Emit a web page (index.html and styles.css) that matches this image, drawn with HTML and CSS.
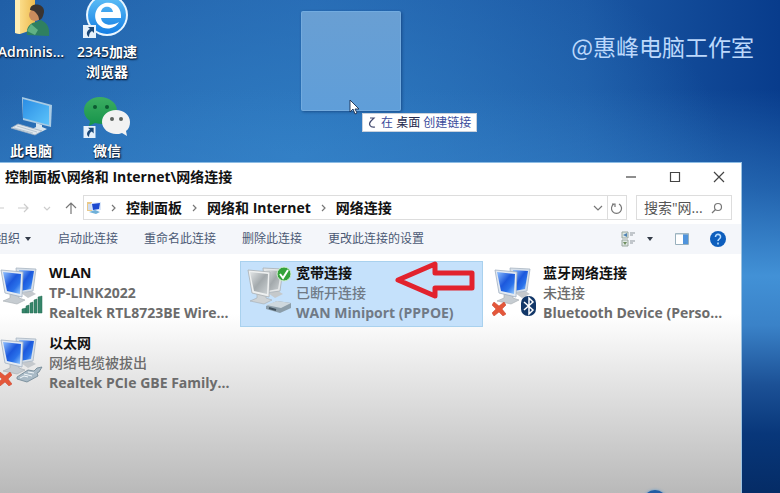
FILE: index.html
```html
<!DOCTYPE html>
<html lang="zh-CN">
<head>
<meta charset="utf-8">
<meta name="viewport" content="width=device-width, initial-scale=1">
<title>网络连接</title>
<link rel="stylesheet" href="styles.css">
</head>
<body>
<svg class="defs" aria-hidden="true">
  <defs>
    <linearGradient id="screen" x1="0" y1="0" x2="1" y2="1">
      <stop offset="0" stop-color="#8fc0ff"/><stop offset=".45" stop-color="#1c58dc"/><stop offset=".7" stop-color="#2a72ea"/><stop offset="1" stop-color="#9dd0ff"/>
    </linearGradient>
    <linearGradient id="screen-off" x1="0" y1="0" x2="1" y2="1">
      <stop offset="0" stop-color="#e2e5e6"/><stop offset=".5" stop-color="#a3a9ac"/><stop offset="1" stop-color="#cdd2d4"/>
    </linearGradient>
    <linearGradient id="pc" x1="0" y1="0" x2="1" y2="1">
      <stop offset="0" stop-color="#2b8de4"/><stop offset="1" stop-color="#5cc4fb"/>
    </linearGradient>
    <linearGradient id="folder"><stop offset="0" stop-color="#ffe79b"/><stop offset="1" stop-color="#eebb50"/></linearGradient>
    <linearGradient id="globe" x1="0" y1="0" x2="0" y2="1"><stop offset="0" stop-color="#5fc0f7"/><stop offset="1" stop-color="#147ee4"/></linearGradient>
    <linearGradient id="green" x1="0" y1="0" x2="0" y2="1"><stop offset="0" stop-color="#3cae62"/><stop offset="1" stop-color="#16934a"/></linearGradient>
    <symbol id="monitors" viewBox="0 0 48 52">
      <path d="M24 28l10-2 5 3-8 4z" fill="#c5c9cd"/>
      <path d="M19 3l20 1-3 22-15 2z" fill="#d7e0ea" stroke="#a8b5c2" stroke-width=".8"/>
      <path d="M22 5l15 1-3 18-11 2z" fill="url(#screen)"/>
      <path d="M13 28l9 1v4l6 2-8 4-14-3 7-3z" fill="#c6ccd1" stroke="#a5abb0" stroke-width=".6"/>
      <path d="M4 5l22 2-1 25-17-4z" fill="#e3eaf2" stroke="#a1b0c2" stroke-width=".8"/>
      <path d="M6 7l18 2-1 20-13-3z" fill="url(#screen)"/>
    </symbol>
    <symbol id="monitors-off" viewBox="0 0 48 52">
      <path d="M24 28l10-2 5 3-8 4z" fill="#c5c9cb"/>
      <path d="M19 3l20 1-3 22-15 2z" fill="#e4e7e8" stroke="#a9afb2" stroke-width=".8"/>
      <path d="M22 5l15 1-3 18-11 2z" fill="url(#screen-off)"/>
      <path d="M13 28l9 1v4l6 2-8 4-14-3 7-3z" fill="#cfd3d5" stroke="#a5abb0" stroke-width=".6"/>
      <path d="M4 5l22 2-1 25-17-4z" fill="#eef0f0" stroke="#a9afb2" stroke-width=".8"/>
      <path d="M6 7l18 2-1 20-13-3z" fill="url(#screen-off)"/>
    </symbol>
    <symbol id="cross" viewBox="0 0 14 14">
      <path d="M2 0l5 4 5-4 2 3-4 4 4 5-3 2-4-4-5 4-2-3 4-4-4-4z" fill="#e4573a" stroke="#c9402a" stroke-width=".5"/>
    </symbol>
    <symbol id="shortcut" viewBox="0 0 13 13">
      <path d="M0 0h13v13H0z" fill="#e6f1fb"/>
      <path d="M5 2h6v6L9 6C7 7 6 9 6 12 3 10 3 6 7 4z" fill="#1b4878"/>
    </symbol>
    <symbol id="chevron" viewBox="0 0 8 12"><path d="M2 3l3 3-3 3" fill="none" stroke="#777" stroke-width="1.2"/></symbol>
    <symbol id="caret" viewBox="0 0 8 6"><path d="M1 1h6L4 5z" fill="#333b48"/></symbol>
  </defs>
</svg>

<main class="desktop">
  <nav class="shortcuts" aria-label="桌面">
    <a class="shortcut" href="#">
      <svg class="shortcut-icon" viewBox="0 0 48 42">
        <path d="M8 0l20-2v34l-15 5-5-1z" fill="url(#folder)"/>
        <path d="M8 0l5 2v35l-5-1z" fill="#ffeeb5"/>
        <path d="M20 38c-1-8 3-12 9-13l5-2c6 3 9 7 8 16z" fill="#2f8060"/>
        <path d="M24 27l-4 7 8 4 3-5z" fill="#61b184"/>
        <circle cx="28" cy="18" r="6" fill="#c98c5d"/>
        <path d="M23 13c0-8 15-7 14 2-1 6-3 8-5 8 0-5-3-7-5-9z" fill="#3b3430"/>
      </svg>
      <span>Adminis...</span>
    </a>
    <a class="shortcut" href="#">
      <svg class="shortcut-icon" viewBox="0 0 48 42">
        <circle cx="24" cy="18" r="21" fill="#e9f6ff"/>
        <circle cx="24" cy="18" r="19" fill="url(#globe)"/>
        <path d="M38 21H18c1 7 10 9 18 4-4 7-14 9-20 3-7-7-4-19 6-22 10-2 17 5 16 15zM18 15h12c-1-7-11-7-12 0z" fill="#fff"/>
        <use href="#shortcut" x="0" y="28" width="13" height="13"/>
      </svg>
      <span>2345加速<br>浏览器</span>
    </a>
    <a class="shortcut" href="#">
      <svg class="shortcut-icon" viewBox="0 0 48 42">
        <path d="M15 1l30 8-1 22-28-7z" fill="#a9cbe4"/>
        <path d="M16 3l26 7v19l-26-7z" fill="url(#pc)"/>
        <path d="M29 27l6 2v2l5 2-6 3-9-3 4-2z" fill="#d8e5ee"/>
        <path d="M11 28l24 7-7 4-24-7z" fill="#e0e7ed" stroke="#9eb0c1" stroke-width=".8"/>
        <path d="M10 30l20 6M7 32l19 5" stroke="#9baebe" stroke-width=".6"/>
      </svg>
      <span>此电脑</span>
    </a>
    <a class="shortcut" href="#">
      <svg class="shortcut-icon" viewBox="0 0 48 42">
        <path d="M17 1c-9 0-16 6-16 13 0 5 2 8 6 11l-1 5 6-3c15 4 23-4 22-13C34 7 26 1 17 1z" fill="url(#green)"/>
        <circle cx="12" cy="11" r="2" fill="#0c5a31"/><circle cx="24" cy="11" r="2" fill="#0c5a31"/>
        <path d="M33 14c-8 0-14 5-14 12s7 12 14 12c2 0 4 0 6-1l5 3-1-5c3-2 4-6 4-9 0-7-6-12-14-12z" fill="#f2f2f2"/>
        <circle cx="29" cy="23" r="2" fill="#5d635f"/><circle cx="38" cy="23" r="2" fill="#5d635f"/>
        <use href="#shortcut" x="0" y="30" width="13" height="12"/>
      </svg>
      <span>微信</span>
    </a>
  </nav>

  <div class="drag-ghost"></div>
  <div class="drag-tip">
    <svg viewBox="0 0 10 12" width="10" height="12"><path d="M3 1h4L4 4c-3 3-1 7 4 6" fill="none" stroke="#444b70" stroke-width="1.2"/></svg>
    <span>在 <b>桌面</b> 创建链接</span>
  </div>
  <svg class="pointer" viewBox="0 0 10 16"><path d="M1 1v12l3-3 2 5 2-1-2-4h4z" fill="#fff" stroke="#182f50" stroke-width=".9"/></svg>
  <p class="watermark">@惠峰电脑工作室</p>

  <section class="window">
    <header class="titlebar">
      <h1>控制面板\网络和 Internet\网络连接</h1>
      <div class="window-buttons">
        <button aria-label="最小化"><svg viewBox="0 0 12 12"><path d="M1 6h10"/></svg></button>
        <button aria-label="最大化"><svg viewBox="0 0 12 12"><path d="M1.500 1.500h9v9h-9z"/></svg></button>
        <button aria-label="关闭"><svg viewBox="0 0 12 12"><path d="M1 1l10 10M11 1L1 11"/></svg></button>
      </div>
    </header>

    <div class="address-row">
      <div class="history">
        <button aria-label="后退"><svg viewBox="0 0 12 12" class="faint"><path d="M11 6H1M5 2L1 6l4 4"/></svg></button>
        <button aria-label="前进"><svg viewBox="0 0 12 12" class="faint"><path d="M1 6h10M7 2l4 4-4 4"/></svg></button>
        <button aria-label="最近位置"><svg viewBox="0 0 12 12" class="faint"><path d="M3 5l3 3 3-3"/></svg></button>
        <button aria-label="上移"><svg viewBox="0 0 12 12" class="up"><path d="M6 12V1M1 6l5-5 5 5"/></svg></button>
      </div>
      <div class="address">
        <svg class="place" viewBox="0 0 16 16">
          <path d="M1 2h5v9H1z" fill="#e9c98a"/><path d="M2 4h7v6H2z" fill="#cfdcf2"/>
          <path d="M5 3l10-1v8l-9 1z" fill="#dce8fa"/><path d="M6 4l8-1-1 6-6 1z" fill="#1c48cf"/>
          <path d="M3 12l6-2 5 2-4 2z" fill="#6fb0d8"/>
        </svg>
        <svg class="sep"><use href="#chevron"/></svg><a href="#">控制面板</a>
        <svg class="sep"><use href="#chevron"/></svg><a href="#">网络和 Internet</a>
        <svg class="sep"><use href="#chevron"/></svg><a href="#">网络连接</a>
        <button class="drop" aria-label="展开"><svg viewBox="0 0 12 12"><path d="M2 4l4 4 4-4"/></svg></button>
        <button class="refresh" aria-label="刷新"><svg viewBox="0 0 12 12"><path d="M8 2a5 5 0 1 1-5 0M4 5V2H1"/></svg></button>
      </div>
      <label class="search">
        <input type="text" placeholder="搜索&quot;网..." aria-label="搜索网络连接">
        <svg viewBox="0 0 12 12"><circle cx="7" cy="5" r="3.500"/><path d="M4.500 7.500L1 11"/></svg>
      </label>
    </div>

    <div class="toolbar">
      <button class="organize">组织 <svg class="caret"><use href="#caret"/></svg></button>
      <button>启动此连接</button>
      <button>重命名此连接</button>
      <button>删除此连接</button>
      <button>更改此连接的设置</button>
      <div class="tools">
        <button class="view" aria-label="更改视图">
          <svg viewBox="0 0 16 16" width="16" height="16"><path d="M1 1h6v6H1zM1 9h6v6H1z" fill="#dfe8e4" stroke="#9aa79e"/><path d="M2 4l4-2v4z" fill="#4f82b4"/><path d="M2 11h4l-2 3z" fill="#6f8e60"/><path d="M9 2h5M9 4h3M9 10h5M9 12h3" stroke="#8f979d"/></svg>
          <svg class="caret"><use href="#caret"/></svg>
        </button>
        <button aria-label="预览窗格"><svg viewBox="0 0 14 12" width="14" height="12"><path d="M.5.5h13v11H.5z" fill="#fff" stroke="#98b0bd"/><path d="M8 1h5v10H8z" fill="#4f93dc"/><path d="M1 1h12" stroke="#a9bec9"/></svg></button>
        <button aria-label="帮助"><svg viewBox="0 0 16 16" width="16" height="16"><circle cx="8" cy="8" r="8" fill="#0d5ebd"/><path d="M5.500 6c0-4 5.500-3 5 0C10.500 8 8 8 8 10M8 11.500v2" fill="none" stroke="#b5dcff" stroke-width="1.600"/></svg></button>
      </div>
    </div>

    <ul class="connections">
      <li class="connection">
        <svg class="net" viewBox="0 0 48 52"><use href="#monitors" width="48" height="52"/>
          <path d="M25 48v-4l4-1v5zM29 48v-7l3-1v8zM33 48V38l3-1v11zM37 48V35l3-1v14zM41 48V32l4-1v17z" fill="#36856a" stroke="#246d54" stroke-width=".5"/></svg>
        <div><h2>WLAN</h2><p>TP-LINK2022</p><p>Realtek RTL8723BE Wire...</p></div>
      </li>
      <li class="connection selected">
        <svg class="net" viewBox="0 0 48 52"><use href="#monitors-off" width="48" height="52"/>
          <circle cx="40" cy="9" r="7" fill="#35a23b" stroke="#d4eed2"/><path d="M36 9l3 4 5-8" fill="none" stroke="#fff" stroke-width="2"/>
          <path d="M22 41l11-5 14 2v5l-11 5-14-4z" fill="#8c9eaa"/><path d="M22 40l11-4 14 2-10 5z" fill="#ced8de"/><path d="M25 43l7 2" stroke="#42535f" stroke-width="2"/></svg>
        <div><h2>宽带连接</h2><p class="state">已断开连接</p><p>WAN Miniport (PPPOE)</p></div>
        <svg class="callout" viewBox="0 0 84 40"><path d="M5 20L42 4v9h37v15H42v8z" fill="none" stroke="#e2222d" stroke-width="5" stroke-linejoin="round"/></svg>
      </li>
      <li class="connection">
        <svg class="net" viewBox="0 0 48 52"><use href="#monitors" width="48" height="52"/>
          <use href="#cross" x="1" y="37" width="14" height="14"/>
          <rect x="30" y="31" width="15" height="20" rx="7" fill="#123768"/><path d="M33 37l9 8-4 4V33l4 4-9 8" fill="none" stroke="#fff" stroke-width="1.500"/></svg>
        <div><h2>蓝牙网络连接</h2><p class="state">未连接</p><p>Bluetooth Device (Perso...</p></div>
      </li>
      <li class="connection">
        <svg class="net" viewBox="0 0 48 52"><use href="#monitors" width="48" height="52"/>
          <use href="#cross" x="1" y="37" width="14" height="14"/>
          <path d="M20 42l11-7 6 1 3-3 5-1-3 5-2 1 1 3-11 6-10-3z" fill="#a9bac6" stroke="#6d8492" stroke-width=".8"/><path d="M23 43l4-2 4 1M27 39l8 2M31 37l6 1" fill="none" stroke="#f3f8fb"/></svg>
        <div><h2>以太网</h2><p class="state">网络电缆被拔出</p><p>Realtek PCIe GBE Family...</p></div>
      </li>
    </ul>
  </section>
  <div class="orb"></div>
</main>
</body>
</html>
```
FILE: styles.css
```css
* { box-sizing: border-box; }

body {
  margin: 0;
  font-family: "Open Sans", "Noto Sans CJK SC", sans-serif;
  font-size: 14px;
  line-height: 20px;
  color: #111;
}

h1, h2, p, ul { margin: 0; padding: 0; font-size: inherit; list-style: none; }
a { color: inherit; text-decoration: none; }

button {
  padding: 0;
  border: 0;
  background: none;
  color: inherit;
  font: inherit;
  display: flex;
  align-items: center;
  white-space: nowrap;
}

.defs { position: absolute; width: 0; height: 0; }

.desktop {
  position: relative;
  min-height: 100vh;
  overflow: hidden;
  background:
    linear-gradient(to bottom, rgba(58, 135, 205, 0) 18%, rgba(58, 135, 205, .5) 38%, #4291d6 56%, #3a82c8 66%, #1c5196 78%, #08377a 88%, #052c66) right / 100% 100% no-repeat,
    radial-gradient(ellipse 55% 50% at 38% 32%, #2f7cc2, rgba(46, 124, 196, 0)),
    linear-gradient(to right, #1f5da5, #2566b0 40%, #1b58a4 75%, #083c8c);
}

.shortcuts {
  position: absolute;
  top: -3px;
  left: -7px;
  display: grid;
  grid-template-columns: 76px 76px;
  grid-template-rows: 99px auto;
}

.shortcut {
  display: flex;
  flex-direction: column;
  align-items: center;
  gap: 3px;
  color: #fff;
  font-weight: 600;
  text-align: center;
  text-shadow: 1px 1px 2px #061c3a, 0 1px 1px #061c3a;
}

.shortcut-icon { width: 48px; height: 42px; }

.drag-ghost {
  position: absolute;
  top: 11px;
  left: 301px;
  width: 100px;
  height: 100px;
  border: 1px solid rgba(125, 180, 228, .6);
  border-radius: 2px;
  background: linear-gradient(#699fd3, #5f9ed9);
  box-shadow: 1px 1px 3px rgba(8, 40, 90, .5);
}

.drag-tip {
  position: absolute;
  top: 113px;
  left: 362px;
  display: flex;
  align-items: center;
  gap: 4px;
  padding: 0 5px 0 4px;
  border: 1px solid #c9d1dc;
  background: #fff;
  color: #3a4c9c;
  font-size: 12px;
  line-height: 17px;
  white-space: nowrap;
}

.drag-tip b { color: #262a4d; font-weight: 400; }

.pointer { position: absolute; top: 99px; left: 349px; width: 10px; height: 16px; }

.watermark {
  position: absolute;
  top: 29px;
  right: 26px;
  color: #bcd8fb;
  font-family: "Noto Sans CJK SC", sans-serif;
  font-size: 23px;
  line-height: 34px;
}

.window {
  position: absolute;
  top: 162px;
  right: 38px;
  bottom: 0;
  left: 0;
  display: flex;
  flex-direction: column;
  border-top: 1px solid #8dbce4;
  border-right: 1px solid #9cc3e2;
  background: #fff;
}

.titlebar {
  display: flex;
  justify-content: space-between;
  align-items: center;
  height: 28px;
  padding: 0 16px 0 5px;
}

.titlebar h1 { font-weight: 700; white-space: nowrap; }

.window-buttons { display: flex; gap: 32px; }

.window-buttons svg, .history svg, .drop svg, .refresh svg, .search svg {
  display: block;
  width: 12px;
  height: 12px;
  fill: none;
  stroke: #444;
  stroke-width: 1.2;
}

.address-row {
  display: flex;
  align-items: center;
  gap: 9px;
  height: 33px;
  padding-right: 9px;
}

.history { display: flex; gap: 12px; margin-left: -7px; }
.history .faint { stroke: #ccc; }
.history .up { stroke: #777; }

.address {
  flex: 1;
  display: flex;
  align-items: center;
  height: 25px;
  margin-left: -3px;
  padding-left: 2px;
  border: 1px solid #ddd;
  font-weight: 700;
  white-space: nowrap;
}

.place { width: 16px; height: 16px; }
.sep { width: 8px; height: 12px; margin: 0 8px; }
.address a + .sep { margin: 0 8px 0 9px; }
.drop { margin-left: auto; padding-right: 3px; }
.refresh { height: 23px; padding: 0 3px; border-left: 1px solid #ddd; }
.address .drop svg, .address .refresh svg, .search svg { stroke: #777; }

.search {
  display: flex;
  align-items: center;
  width: 96px;
  height: 25px;
  padding: 0 8px 0 7px;
  border: 1px solid #ddd;
}

.search input {
  flex: 1;
  min-width: 0;
  padding: 0;
  border: 0;
  background: none;
  font: inherit;
}

.search input::placeholder { color: #555; }

.toolbar {
  display: flex;
  align-items: center;
  gap: 26px;
  height: 30px;
  padding-right: 15px;
  background: #f4f6fa;
  color: #4b5974;
  font-size: 12px;
}

.organize { gap: 4px; margin-left: -4px; }
.caret { width: 8px; height: 6px; }
.tools { display: flex; align-items: center; gap: 21px; margin-left: auto; }
.view { gap: 9px; }

.connections {
  flex: 1;
  display: grid;
  grid-template-columns: repeat(3, 243px);
  grid-auto-rows: 66px;
  gap: 4px;
  padding-top: 7px;
  margin-left: -7px;
  background: linear-gradient(#fff 25%, #e9e9e9 48%, #dcdcdc 62%, #b9b9b9);
}

.connection {
  position: relative;
  display: flex;
  gap: 4px;
  padding: 1px 3px;
  border: 1px solid transparent;
  color: #6c6c6c;
  font-weight: 700;
  white-space: nowrap;
}

.connection h2 { color: #111; font-weight: 700; }
.connection .state { font-weight: 500; }
.selected { background: #c5e1fb; border-color: #a9d1ee; color: #707a86; }
.net { flex: none; width: 48px; height: 52px; margin-top: 2px; }
.callout { position: absolute; top: -2px; left: 152px; width: 84px; height: 40px; }

.orb {
  position: absolute;
  left: 643px;
  bottom: -21px;
  width: 24px;
  height: 24px;
  border-radius: 50%;
  background: #235ca3;
  box-shadow: 0 0 3px #5f9bd1;
}
```
